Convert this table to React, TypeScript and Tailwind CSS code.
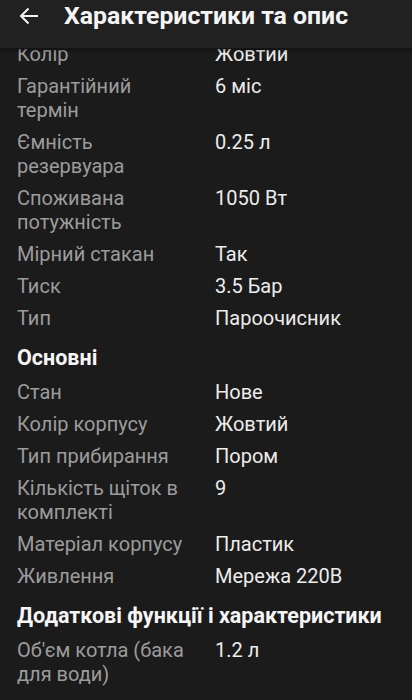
import React from "react";

type Row = { k: string; v: string };
type Item = { type: "row"; k: string; v: string } | { type: "h"; t: string };

const items: Item[] = [
  { type: "row", k: "Колір", v: "Жовтий" },
  { type: "row", k: "Гарантійний термін", v: "6 міс" },
  { type: "row", k: "Ємність резервуара", v: "0.25 л" },
  { type: "row", k: "Споживана потужність", v: "1050 Вт" },
  { type: "row", k: "Мірний стакан", v: "Так" },
  { type: "row", k: "Тиск", v: "3.5 Бар" },
  { type: "row", k: "Тип", v: "Пароочисник" },
  { type: "h", t: "Основні" },
  { type: "row", k: "Стан", v: "Нове" },
  { type: "row", k: "Колір корпусу", v: "Жовтий" },
  { type: "row", k: "Тип прибирання", v: "Пором" },
  { type: "row", k: "Кількість щіток в комплекті", v: "9" },
  { type: "row", k: "Матеріал корпусу", v: "Пластик" },
  { type: "row", k: "Живлення", v: "Мережа 220В" },
  { type: "h", t: "Додаткові функції і характеристики" },
  { type: "row", k: "Об'єм котла (бака для води)", v: "1.2 л" },
];

function RowView({ k, v }: Row) {
  return (
    <div className="grid grid-cols-[176px_1fr] gap-x-[22px] py-[4px] text-[20px] leading-[24px]">
      <div className="text-[#9c9c9c]">{k}</div>
      <div className="text-[#ececec]">{v}</div>
    </div>
  );
}

export default function App() {
  return (
    <div
      className="h-[700px] w-[412px] overflow-hidden bg-[#1b1b1b] flex flex-col"
      style={{ fontFamily: "Roboto, 'Noto Sans', sans-serif" }}
    >
      <div className="relative z-10 h-[49px] shrink-0 bg-[#212121] border-b border-[#141414] shadow-[0_1px_3px_rgba(0,0,0,0.5)] flex items-start">
        <div className="w-[64px] flex items-center pl-[19px] pt-[7px]">
          <svg width="20" height="18" viewBox="0 0 20 18" fill="none">
            <path
              d="M19 9H2M9.5 1.5L2 9l7.5 7.5"
              stroke="#f2f2f2"
              strokeWidth="2"
              strokeLinecap="butt"
              strokeLinejoin="miter"
            />
          </svg>
        </div>
        <div className="pt-[1px] text-[24.8px] leading-[30px] font-bold text-[#f5f5f5] whitespace-nowrap">
          Характеристики та опис
        </div>
      </div>
      <div className="flex-1 overflow-hidden">
        <div className="-mt-[11px] px-[17px]">
          {items.map((it, i) =>
            it.type === "row" ? (
              <RowView key={i} k={it.k} v={it.v} />
            ) : (
              <div
                key={i}
                className="pt-[12px] pb-[6px] text-[21.5px] leading-[24px] font-bold text-[#f5f5f5] whitespace-nowrap"
              >
                {it.t}
              </div>
            )
          )}
        </div>
      </div>
    </div>
  );
}
